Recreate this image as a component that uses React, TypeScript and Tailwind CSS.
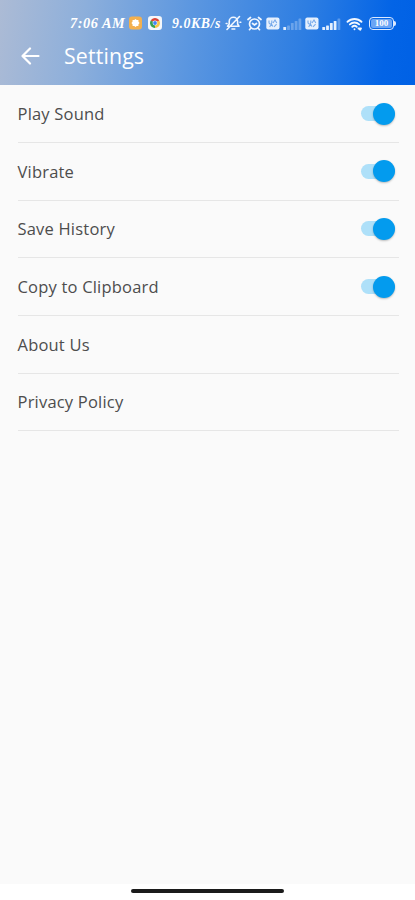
import { useState } from 'react';

function SimBadge() {
  return (
    <svg width="14" height="13" viewBox="0 0 14 13">
      <rect x="0.3" y="0.5" width="13.2" height="12" rx="2" fill="#e6f0fd" />
      <path d="M3 3.4v2.2a1.4 1.4 0 0 0 2.8 0V3.4M7 6l2-3 1.8 3M3.6 9.8l2-2.6 1.2 2.4M8 9.8l2.6-2.6" fill="none" stroke="#76a9ea" strokeWidth="1.1" />
    </svg>
  );
}

function Signal({ level }: { level: number }) {
  const bars = [3, 4.5, 7, 9, 11.5];
  return (
    <svg width="19" height="12" viewBox="0 0 19 12">
      {bars.map((h, i) => (
        <rect key={h} x={0.3 + i * 3.8} y={12 - h} width="2.8" height={h} rx="0.6" fill="#eef5ff" opacity={i < level ? 0.95 : 0.3} />
      ))}
    </svg>
  );
}

function StatusBar() {
  return (
    <div className="flex h-[46px] items-center pl-[70px] text-white">
      <span className="w-[59px] whitespace-nowrap font-['Liberation_Serif',serif] text-[14.3px] font-bold italic leading-none tracking-[0.55px]">7:06 AM</span>
      <svg width="13" height="14" viewBox="0 0 13 14">
        <rect y="0.4" width="13" height="13.2" rx="3" fill="#f3b04f" />
        <path d="M6.5 3l1.2 1.1 1.7-.1.1 1.7L10.6 7 9.5 8.3l-.1 1.7-1.7-.1L6.5 11l-1.2-1.1-1.7.1-.1-1.7L2.4 7l1.1-1.3.1-1.7 1.7.1z" fill="#fff" />
      </svg>
      <svg className="ml-[6px]" width="14" height="14" viewBox="0 0 14 14">
        <rect width="14" height="14" rx="3.2" fill="#f4f7fb" />
        <path d="M7 7L2.7 4.5A5 5 0 0 1 11.3 4.5z" fill="#dc4437" />
        <path d="M7 7L2.7 4.5A5 5 0 0 0 7 12z" fill="#35a055" />
        <path d="M7 7l4.3-2.5A5 5 0 0 1 7 12z" fill="#f6c444" />
        <circle cx="7" cy="7" r="2.4" fill="#fff" />
        <circle cx="7" cy="7" r="1.9" fill="#4285f4" />
      </svg>
      <span className="ml-[10px] w-[53px] whitespace-nowrap pt-px font-['Liberation_Serif',serif] text-[13.8px] font-bold italic leading-none tracking-[0.6px]">9.0KB/s</span>
      <svg width="17" height="16" viewBox="0 0 17 16" fill="none" stroke="#f1f7ff" strokeWidth="1.6" strokeLinecap="round" strokeLinejoin="round">
        <path d="M2.5 11.2h11.5L12.600 9V6.500a4.200 4.200 0 0 0-8.400 0V9zM7 14h2.800M2 14.500L14.500 1.500" />
        <path d="M1.200 8.500h.8M15 7.200h.8" />
      </svg>
      <svg className="ml-[5px]" width="15" height="15" viewBox="0 0 15 15" fill="none" stroke="#f1f7ff" strokeWidth="1.7" strokeLinecap="round">
        <circle cx="7.5" cy="8" r="5" />
        <path d="M1 3.5l2.5-2M14 3.5l-2.500-2M5.5 7.5l2 1.500 2-1.500M3.500 12.500l-1 1.200M11.500 12.500l1 1.200" />
      </svg>
      <div className="ml-[4px] flex items-center gap-[3px]">
        <SimBadge />
        <div className="mt-[2px]"><Signal level={1} /></div>
        <SimBadge />
        <div className="mt-[2px]"><Signal level={4} /></div>
      </div>
      <svg className="ml-[5px] mt-[2px]" width="17" height="14" viewBox="0 0 17 14" fill="none" stroke="#f1f7ff" strokeWidth="1.9" strokeLinecap="round">
        <path d="M1.500 4.800a10 10 0 0 1 14 0M3.900 7.400a6.600 6.600 0 0 1 9.200 0M6.300 9.800a3.200 3.200 0 0 1 4.400 0" />
        <path d="M8.500 12.300h.01M12.500 11.500h2.500M12.700 11.500l1.600 1.200" />
      </svg>
      <div className="ml-[6px] flex items-center">
        <div className="flex h-[13px] w-[25px] items-center justify-center rounded-[4px] border-[1.5px] border-[#dceaff] p-px">
          <span className="flex h-[9px] w-full items-center justify-center rounded-[2px] bg-[#6aa5f5] font-['Liberation_Serif',serif] text-[9px] font-bold leading-none text-white">100</span>
        </div>
        <div className="h-[5px] w-[2px] rounded-r-sm bg-[#dceaff]" />
      </div>
    </div>
  );
}

function Toggle({ label }: { label: string }) {
  const [on, setOn] = useState(true);
  return (
    <button
      role="switch"
      aria-checked={on}
      aria-label={label}
      onClick={() => setOn(!on)}
      className={`flex h-[15px] w-[34px] items-center rounded-full ${on ? 'justify-end bg-[#aee0f9]' : 'justify-start bg-[#b8b8b8]'}`}
    >
      <span className={`h-[22px] w-[22px] shrink-0 rounded-full shadow-[0_1px_2px_rgba(0,0,0,0.25)] ${on ? 'bg-[#039bee]' : 'bg-[#f1f1f1]'}`} />
    </button>
  );
}

const rows = [
  { label: 'Play Sound', toggle: true },
  { label: 'Vibrate', toggle: true },
  { label: 'Save History', toggle: true },
  { label: 'Copy to Clipboard', toggle: true },
  { label: 'About Us', toggle: false },
  { label: 'Privacy Policy', toggle: false },
];

export default function App() {
  return (
    <div className="flex h-[900px] w-[415px] flex-col overflow-hidden bg-[#fafafa] font-['Open_Sans',sans-serif]">
      <header className="h-[84.5px] shrink-0 bg-[linear-gradient(98deg,#acbbd5_0%,#8dafdb_20%,#5c97e0_45%,#2e7ee2_72%,#0364e6_92%,#0061e5_100%)]">
        <StatusBar />
        <div className="flex h-[20px] items-center pl-[21px] text-white">
          <svg width="19" height="18" viewBox="0 0 19 18" fill="none" stroke="currentColor" strokeWidth="2.2" strokeLinecap="round" strokeLinejoin="round">
            <path d="M17.5 9H1.5M9 1.5L1.5 9 9 16.5" />
          </svg>
          <h1 className="ml-[24px] text-[21.3px] leading-none tracking-[0.15px]">Settings</h1>
        </div>
      </header>
      <main className="flex-1 pl-[17.5px] pr-[16px] pt-[0.7px]">
        {rows.map(row => (
          <div key={row.label} className="flex h-[57.7px] items-center justify-between border-b-[1.5px] border-[#e6e6e6] pr-[4px]">
            <span className="pt-[1.5px] text-[16.5px] tracking-[0.2px] text-[#4d4d4d]">{row.label}</span>
            {row.toggle && <Toggle label={row.label} />}
          </div>
        ))}
      </main>
      <footer className="flex h-[16px] shrink-0 justify-center bg-white pt-[5px]">
        <div className="h-[3.5px] w-[153px] rounded-full bg-[#1b1b1b]" />
      </footer>
    </div>
  );
}
